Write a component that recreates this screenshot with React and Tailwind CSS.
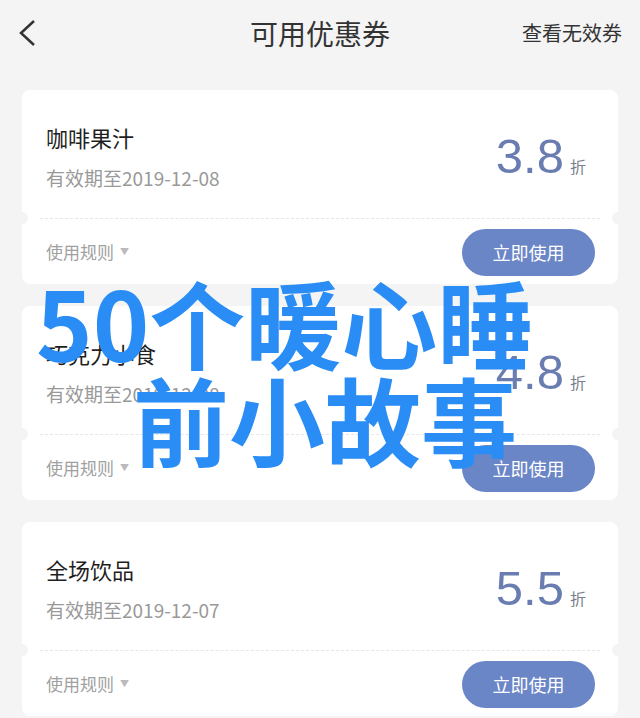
import React from 'react';

const COUPONS = [
  { name: '咖啡果汁', date: '2019-12-08', rate: '3.8' },
  { name: '巧克力小食', date: '2019-12-08', rate: '4.8' },
  { name: '全场饮品', date: '2019-12-07', rate: '5.5' },
];

const FONT = { fontFamily: '"Noto Sans CJK SC", "Noto Sans", sans-serif' };

function CouponCard({ coupon }) {
  return (
    <div className="relative bg-white rounded-lg h-[194px] flex flex-col">
      {/* Top part */}
      <div className="h-[128px] flex items-start justify-between pl-6 pr-[32px]">
        <div className="pt-[32px]">
          <div className="text-[22px] leading-[30px] text-[#1f1f1f]">{coupon.name}</div>
          <div className="mt-[13px] text-[19px] leading-[26px] text-[#999]">
            有效期至{coupon.date}
          </div>
        </div>
        <div className="pt-[42px] flex items-baseline text-[#6a7db0]">
          <span className="text-[49px] leading-[48px] font-['Liberation_Sans',sans-serif]">
            {coupon.rate}
          </span>
          <span className="ml-[6px] text-[16px] text-[#7a7f8c]">折</span>
        </div>
      </div>

      {/* Dashed divider with notches */}
      <div className="relative h-0">
        <div className="mx-[18px] border-t border-dashed border-[#e6e6e6]" />
        <div className="absolute -left-[6px] -top-[6px] w-[12px] h-[12px] rounded-full bg-[#f4f4f4]" />
        <div className="absolute -right-[6px] -top-[6px] w-[12px] h-[12px] rounded-full bg-[#f4f4f4]" />
      </div>

      {/* Bottom part */}
      <div className="flex-1 flex items-center justify-between pl-6 pr-[23px] pt-[2px]">
        <div className="flex items-center text-[17px] text-[#a0a0a0]">
          使用规则
          <span className="ml-[6px] text-[9px] text-[#bbb]">▼</span>
        </div>
        <button className="w-[133px] h-[47px] rounded-full bg-[#6b86c6] text-white text-[18px]">
          立即使用
        </button>
      </div>
    </div>
  );
}

export default function App() {
  return (
    <div className="relative w-[640px] h-[718px] overflow-hidden bg-[#f4f4f4]" style={FONT}>
      {/* Header */}
      <div className="h-[66px] flex items-center justify-between px-[18px]">
        <svg width="18" height="28" viewBox="0 0 18 28" fill="none">
          <polyline points="16,2 3,14 16,26" stroke="#333" strokeWidth="2.5" />
        </svg>
        <div className="absolute left-0 right-0 top-[14px] text-center text-[28px] leading-[38px] text-[#333] pointer-events-none">
          可用优惠券
        </div>
        <div className="text-[20px] text-[#333]">查看无效券</div>
      </div>

      {/* Coupon list */}
      <div className="flex flex-col gap-[22px] px-[22px] pt-[24px]">
        {COUPONS.map((c) => (
          <CouponCard key={c.name} coupon={c} />
        ))}
      </div>

      {/* Overlay title */}
      <div className="absolute left-0 top-0 pointer-events-none font-bold text-[96px] leading-none text-[#2a8cf5]">
        <div className="absolute left-[36px] top-[273px] whitespace-nowrap">50个暖心睡</div>
        <div className="absolute left-[133px] top-[370px] whitespace-nowrap">前小故事</div>
      </div>
    </div>
  );
}
